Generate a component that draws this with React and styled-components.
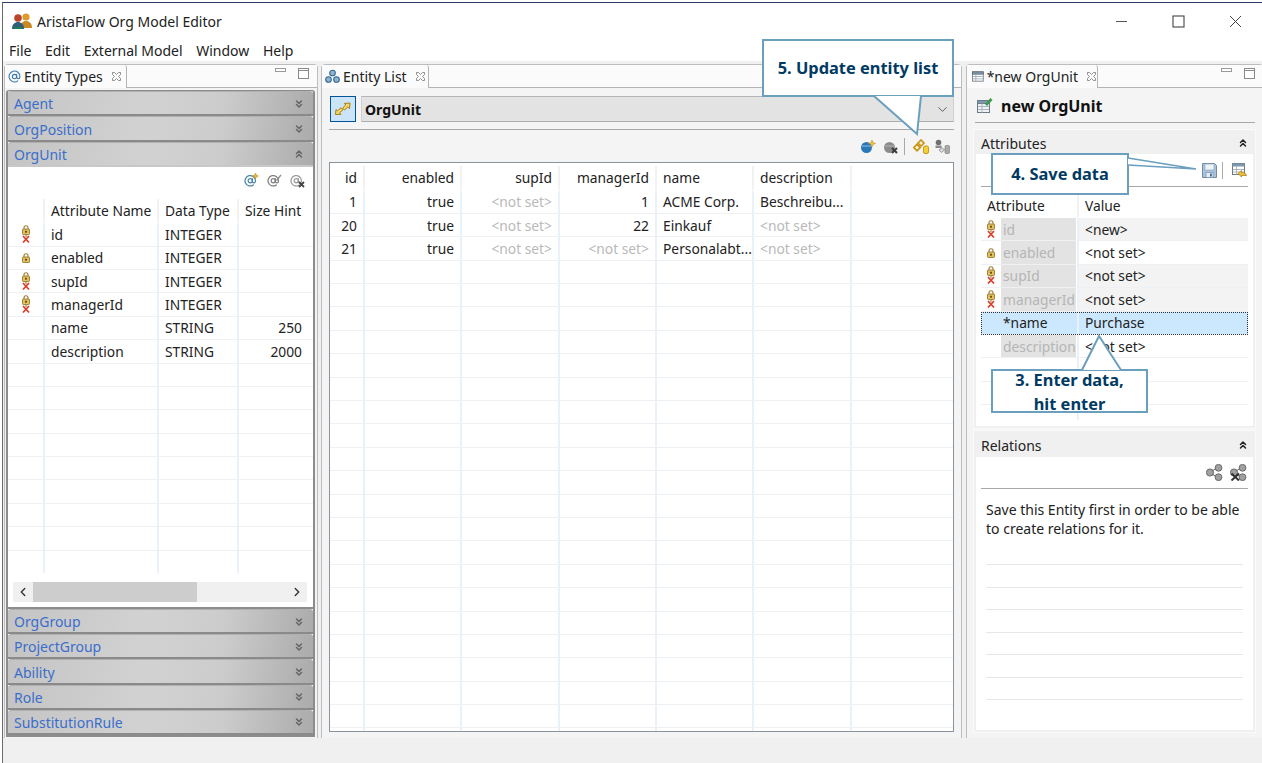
import React from "react";
import styled, { createGlobalStyle } from "styled-components";
import { ChevronsDown, ChevronsUp, ChevronDown, ChevronLeft, ChevronRight, AtSign } from "lucide-react";

const Global = createGlobalStyle`
  html, body { margin: 0; padding: 0; background: #fff; }
  body { font-family: "Noto Sans", "Open Sans", sans-serif; font-size: 14px; color: #1c1c1c; }
  * { box-sizing: border-box; }
`;

const Win = styled.div`
  position: relative; width: 1262px; height: 763px; overflow: hidden; background: #fff;
  padding-top: 2px; display: flex; flex-direction: column;
`;
const Frame = styled.div`
  flex: 1; min-height: 0; display: flex; flex-direction: column; margin-left: 2px;
  border-top: 1px solid #2e3a66; border-left: 1px solid #6a6a6a; background: #fff;
`;
const TitleBar = styled.div`height: 36px; display: flex; align-items: center; padding-left: 8px; gap: 4px; flex: none;`;
const TitleText = styled.span`font-size: 14px; color: #222;`;
const WinButtons = styled.div`margin-left: auto; display: flex; margin-right: -2px; align-items: center;`;
const WinButton = styled.div`width: 57px; height: 24px; display: flex; align-items: center; justify-content: center; color: #444;`;
const MenuBar = styled.div`height: 22px; display: flex; align-items: center; padding-left: 6px; gap: 13.6px; flex: none;`;
const MenuItem = styled.span`font-size: 14px; color: #222;`;
const Workbench = styled.div`
  height: 677px; flex: none; background: #f0f0f0; display: flex; padding-top: 3px; padding-left: 1px;
`;
const Status = styled.div`flex: 1; background: #f0f0f0;`;

const Panel = styled.div`
  width: ${p => p.$w}px; margin-left: ${p => p.$ml || 0}px; height: 675px; background: #f4f4f4;
  border: 1px solid #bdbdbd; border-radius: 4px 4px 0 0; display: flex; flex-direction: column; flex: none;
  box-shadow: 0 1px 0 #9c9c9c;
  ${p => p.$open && "border-right: 0;"}
`;
const TabStrip = styled.div`
  height: 23px; flex: none; display: flex; border-bottom: 1px solid #b4b4b4; background: #fbfbfb; position: relative;
`;
const Tab = styled.div`
  width: ${p => p.$w}px; height: 23px; display: flex; align-items: center; padding: 0 0 1px ${p => p.$pl || 3}px; gap: 3px;
  border-right: 1px solid #b4b4b4; font-size: 14px; background: #fbfbfb; border-radius: 3px 3px 0 0; color: #222; white-space: nowrap;
`;
const TabClose = styled.svg`margin-left: 5px; flex: none;`;
const ViewControls = styled.div`margin-left: auto; display: flex; align-items: flex-start; gap: 12px; padding: 2px 8px 0 0;`;
const LeftBody = styled.div`
  flex: 1; min-height: 0; margin: 2px 2px 1px 1px; border: 1px solid #8c8c8c; border-width: 1px 2px 2px 2px;
  display: flex; flex-direction: column; background: #fff; border-radius: 3px 3px 0 0;
`;
const SectionHead = styled.div`
  height: ${p => p.$h || 25.4}px; flex: none; display: flex; align-items: center; padding: 0 8px 1px 6px;
  font-size: 14px; color: #3b6ecb; border-radius: 3px 3px 0 0;
  background: linear-gradient(100deg, #c4c4c4 0%, #d2d2d2 45%, #cccccc 70%, #ababab 100%);
  border-top: 1px solid #b0b0b0;
  box-shadow: inset 0 -2px 0 ${p => p.$open ? "#c8c8c8" : "#8a8a8a"};
  justify-content: space-between;
  svg { color: #666; }
`;
const SectionBody = styled.div`flex: 1; min-height: 0; display: flex; flex-direction: column; background: #fff; overflow: hidden; border-bottom: 2px solid #8c8c8c;`;
const IconBar = styled.div`
  height: ${p => p.$h}px; flex: none; display: flex; justify-content: flex-end; align-items: center; gap: ${p => p.$gap || 0}px;
  padding-right: ${p => p.$pr || 0}px; margin-bottom: ${p => p.$mb || 0}px;
`;
const ToolSlot = styled.div`display: flex; align-items: center; margin-left: ${p => p.$ml || 0}px;`;
const TableBox = styled.div`
  flex: ${p => p.$h ? "none" : 1}; min-height: 0; overflow: hidden; height: ${p => p.$h ? p.$h + "px" : "auto"};
  ${p => p.$framed && "border: 1px solid #8a949e; margin: 0 7px 0 0; background: #fff;"}
  ${p => p.$inset && `margin: 0 ${p.$inset}px 0 ${p.$inset}px;`}
`;
const Row = styled.div`
  display: grid; grid-template-columns: ${p => p.$cols}; height: ${p => p.$h || 23.4}px; padding-top: ${p => p.$pt || 0}px;
  border-bottom: 1px solid ${p => p.$head ? "transparent" : "#eef0f3"};
  ${p => p.$selected && "background: #cce8ff; outline: 1px dotted #333; outline-offset: -1px;"}
`;
const Cell = styled.div`
  display: flex; align-items: center; padding: 0 6px; white-space: nowrap; overflow: hidden; font-size: 13.8px; color: ${p => p.$muted ? "#b9b9b9" : "#222"};
  justify-content: ${p => p.$right ? "flex-end" : p.$center ? "center" : "flex-start"};
  border-right: 2px solid ${p => p.$head ? "#f2f2f2" : "#e9f1fb"};
  ${p => p.$last && "border-right: 0;"}
  ${p => p.$tint && "background: #f3f3f3;"}
`;
const AttrCell = styled.div`
  display: flex; align-items: stretch; overflow: hidden; border-right: 2px solid #e9f1fb;
`;
const AttrIcon = styled.div`width: 20px; flex: none; display: flex; align-items: center; justify-content: center;`;
const AttrName = styled.div`
  flex: 1; margin-right: 1px; display: flex; align-items: center; padding-left: 2px; font-size: 13.8px;
  ${p => p.$disabled ? "background: #e3e3e3; color: #b5b5b5;" : "color: #222;"}
`;
const HScroll = styled.div`
  height: 20px; flex: none; margin: 9px 6px 5px 5px; background: #f0f0f0; display: flex; align-items: center; justify-content: space-between; position: relative; padding: 0 3px;
  svg { color: #333; }
`;
const HThumb = styled.div`position: absolute; left: 20px; top: 0; bottom: 0; width: 164px; background: #cdcdcd;`;
const ComboRow = styled.div`display: flex; gap: 5px; flex: none; padding: 8px 7px 0 8px; height: 34px;`;
const ToggleBtn = styled.div`
  width: 26px; height: 26px; background: #cce4f7; border: 1px solid #005499; flex: none; display: flex; align-items: center; justify-content: center;
`;
const Combo = styled.div`
  flex: 1; height: 26px; background: #e3e3e3; border: 1px solid #d0d0d0; border-top-color: #b5b5b5; border-bottom-color: #adadad; display: flex; align-items: center;
  padding: 0 3px; font-weight: 700; font-size: 14px; justify-content: space-between; color: #111;
  svg { color: #555; }
`;
const Rule = styled.div`height: 1px; flex: none; background: #a8a8a8; margin: ${p => p.$m};`;
const Divider = styled.div`width: 1px; height: 17px; background: #a9a9a9; margin: 0 ${p => p.$mr || 0}px 0 ${p => p.$ml || 0}px;`;
const CenterBody = styled.div`flex: 1; min-height: 0; display: flex; flex-direction: column; padding: 0 0 6px 7px;`;
const FormTitle = styled.div`
  height: 33px; flex: none; display: flex; align-items: center; gap: 8px; padding-left: 10px; font-weight: 700; font-size: 16px; color: #111; margin-top: 1px;
`;
const FormSection = styled.div`
  margin: ${p => p.$mt || 0}px 8px 0 7px; height: ${p => p.$h}px; flex: none; background: #fff; border: 2px solid #f0f0f0; outline: 1px solid #fafafa; display: flex; flex-direction: column;
`;
const FormHead = styled.div`
  height: ${p => p.$h}px; flex: none; background: #f0f0f0; display: flex; align-items: center; justify-content: space-between; padding: 0 4px 0 5px; font-size: 14px; color: #222;
  svg { color: #222; }
`;
const RelText = styled.div`font-size: 14px; line-height: 19px; padding: 11px 10px 0 10px; color: #222; height: 53.5px; flex: none; white-space: nowrap;`;
const BlankLines = styled.div`display: flex; flex-direction: column; margin: 0 10px;`;
const BlankLine = styled.div`height: 22.5px; border-bottom: 1px solid #e6e6e6; flex: none;`;

const Callout = styled.div`
  position: absolute; left: ${p => p.$x}px; top: ${p => p.$y}px; width: ${p => p.$w}px; height: ${p => p.$h}px;
  background: #fff; border: 2px solid #6a9fbe; z-index: 5; display: flex; flex-direction: column; align-items: center; justify-content: ${p => p.$top ? "flex-start" : "center"};
  color: #003a63; font-weight: 700; font-size: 16.4px; line-height: 24px; text-align: center;
`;
const CalloutText = styled.div`position: relative; z-index: 2; margin-top: ${p => p.$shift || 0}px; white-space: nowrap;`;
const Pointer = styled.svg`position: absolute; left: -2px; top: -2px; overflow: visible; z-index: 1;`;

const TabCloseIcon = () => (
  <TabClose width="11" height="11" viewBox="0 0 11 11" fill="none" stroke="#8d8d8d" strokeWidth="1">
    <path d="M1.5 1.5h2L5.5 3.5 7.5 1.5h2v2L7.5 5.5l2 2v2h-2L5.5 7.5l-2 2h-2v-2l2-2-2-2z" />
  </TabClose>
);
const ViewMin = () => <svg width="11" height="8" viewBox="0 0 11 8"><rect x="0.5" y="1.5" width="10" height="3" fill="#fff" stroke="#9a9a9a" /></svg>;
const ViewMax = () => <svg width="11" height="12" viewBox="0 0 11 12"><rect x="0.5" y="1.5" width="10" height="10" fill="#fff" stroke="#8a8a8a" /><path d="M0 3.5h11" stroke="#8a8a8a" /></svg>;

const AppIcon = () => (
  <svg width="22" height="18" viewBox="0 0 22 18">
    <circle cx="15" cy="5" r="3.6" fill="#e09a2a" />
    <path d="M9 16c0-5 3-7 6-7s6 2 6 7z" fill="#c98a25" />
    <circle cx="7" cy="6" r="3.8" fill="#b8452a" />
    <path d="M1 17c0-5 3-7 6-7s6 2 6 7z" fill="#2f5f7a" />
    <path d="M3 16h8" stroke="#1e7f4b" strokeWidth="2" />
  </svg>
);
const LockX = ({ crossed }) => (
  <svg width="10" height={crossed ? 19 : 10} viewBox={crossed ? "0 0 10 19" : "0 0 10 10"}>
    <path d="M3 4V2.8a2 2 0 0 1 4 0V4" fill="none" stroke="#9a7a2e" strokeWidth="1.1" />
    <rect x="1.5" y="4" width="7" height="5.5" rx="0.8" fill="#e0c060" stroke="#8f6d1f" strokeWidth="0.8" />
    <rect x="4" y="5.8" width="2" height="1.8" fill="#6b4e10" />
    {crossed && <path d="M2 11l6 6.5M8 11l-6 6.5" stroke="#d8402e" strokeWidth="1.8" />}
    {crossed && <path d="M5 10v2" stroke="#8f6d1f" strokeWidth="1" />}
  </svg>
);
const AtTool = ({ badge, color = "#4a87a8" }) => (
  <svg width="15" height="15" viewBox="0 0 15 15" fill="none">
    <g transform="translate(0 1.5) scale(0.52)" stroke={color} strokeWidth="2.4" strokeLinecap="round">
      <circle cx="12" cy="12" r="4" />
      <path d="M16 8v5a3 3 0 0 0 6 0v-1a10 10 0 1 0-4 8" />
    </g>
    {badge === "new" && <path d="M11.5 0l1 2 2 1-2 1-1 2-1-2-2-1 2-1z" fill="#e8b530" stroke="#a87f18" strokeWidth=".4" />}
    {badge === "edit" && <path d="M9 7l4.5-5.5 1 1L10 8z" fill="#8c8c8c" />}
    {badge === "del" && <path d="M9 9l5 5M14 9l-5 5" stroke="#444" strokeWidth="1.8" />}
  </svg>
);
const Ball = ({ color, badge }) => (
  <svg width="16" height="15" viewBox="0 0 16 15">
    <circle cx="6.5" cy="8.5" r="5.5" fill={color === "blue" ? "#2b78b8" : "#8c8c8c"} />
    <path d="M1.5 7h10" stroke={color === "blue" ? "#8fc2e8" : "#b5b5b5"} strokeWidth="1" />
    {badge === "new" && <path d="M12 1l1 2.5 2.5 1-2.5 1-1 2.5-1-2.5-2.5-1 2.5-1z" fill="#f0c040" stroke="#b08a20" strokeWidth=".5" />}
    {badge === "del" && <path d="M9 9l5 5M14 9l-5 5" stroke="#3c3c3c" strokeWidth="2" />}
  </svg>
);
const UpdateIcon = () => (
  <svg width="16" height="15" viewBox="0 0 16 15" fill="none">
    <path d="M.8 8.5L4 5.300 7.200 8.500 4 11.700z" fill="#fff6cf" stroke="#c8951a" strokeWidth="1.700" />
    <path d="M5 4L8 1l3 3-3 3z" fill="#fff6cf" stroke="#c8951a" strokeWidth="1.700" />
    <rect x="10.500" y="7" width="5" height="7.500" rx="1.500" fill="#f6cf35" stroke="#b8860b" strokeWidth=".8" />
  </svg>
);
const UpdateGrayIcon = () => (
  <svg width="16" height="15" viewBox="0 0 16 15">
    <circle cx="4.500" cy="3.500" r="2.800" fill="#6f6f6f" />
    <path d="M1.500 6.500h6v2.500h-6z" fill="#8a8a8a" />
    <path d="M5 11l3-2.500 2.500 2.500-3 2.500z" fill="#d6d6d6" stroke="#8a8a8a" strokeWidth=".8" />
    <rect x="11" y="6.500" width="4.500" height="8" rx="1" fill="#a9a9a9" stroke="#777" strokeWidth=".6" />
  </svg>
);
const EntitiesIcon = () => (
  <svg width="15" height="15" viewBox="0 0 15 15" fill="#8fb5d5" stroke="#33688f" strokeWidth="1.1">
    <circle cx="7.5" cy="4" r="2.8" />
    <circle cx="3.5" cy="10.5" r="2.8" />
    <circle cx="11.5" cy="10.5" r="2.8" />
  </svg>
);
const SwapIcon = () => (
  <svg width="20" height="20" viewBox="0 0 20 20" fill="#f6da6a" stroke="#a87c12" strokeWidth="1">
    <path d="M2.500 15.500L3 10.500l1.500 1.300 3.500-3 2 2-3.500 3 1.500 1.500z" />
    <path d="M17 4l-.500 5.500-1.700-1.500-3.300 3-2-2 3.300-3-1.500-1.500z" />
  </svg>
);
const TableIcon = () => (
  <svg width="15" height="13" viewBox="0 0 15 13">
    <rect x=".5" y=".5" width="14" height="12" fill="#fff" stroke="#5d6b78" />
    <rect x=".5" y=".5" width="14" height="3" fill="#7f97ad" stroke="#5d6b78" />
    <path d="M1 6.500h13M1 9.500h13M5 3.500v9" stroke="#93a3b2" />
  </svg>
);
const FormIcon = () => (
  <svg width="16" height="17" viewBox="0 0 16 17">
    <rect x=".5" y="3.500" width="12" height="12" fill="#eef1f4" stroke="#6d7b88" />
    <rect x=".5" y="3.500" width="12" height="3" fill="#7f97ad" stroke="#6d7b88" />
    <path d="M1 9.500h11M1 12.500h11M5 6.500v9" stroke="#aab6c1" />
    <path d="M8 7l5.500-6 2 2L10 9z" fill="#3c9a4a" />
  </svg>
);
const SaveIcon = () => (
  <svg width="15" height="15" viewBox="0 0 15 15">
    <path d="M.5.500h12l2 2v12H.5z" fill="#a9c3dc" stroke="#6f8ba8" />
    <rect x="3" y="1" width="9" height="6" fill="#eef3f8" stroke="#8aa2ba" strokeWidth=".6" />
    <rect x="4" y="9.500" width="7" height="5" fill="#e4ebf2" stroke="#6f8ba8" strokeWidth=".6" />
    <rect x="8" y="10.500" width="1.800" height="3" fill="#4e6d8c" />
  </svg>
);
const RevertIcon = () => (
  <svg width="15" height="15" viewBox="0 0 15 15">
    <rect x=".5" y=".5" width="12" height="11" fill="#fff" stroke="#6d7b88" />
    <rect x=".5" y=".5" width="12" height="3" fill="#7f97ad" />
    <path d="M1 6.500h11M1 9h11M4.500 3.500v8" stroke="#aab6c1" />
    <path d="M6 10.500l3.500-3v1.800c2.500 0 4.500 1 5 3.200h-5v1.500z" fill="#ecbd3a" stroke="#a87c12" strokeWidth=".7" />
  </svg>
);
const RelIcon = ({ del }) => (
  <svg width="17" height="17" viewBox="0 0 17 17" fill="#a0a0a0" stroke="#6c6c6c" strokeWidth="1">
    <circle cx="12.500" cy="3.800" r="3.400" />
    <circle cx="4" cy="8.500" r="3.600" />
    <circle cx="12.500" cy="13.200" r="3.400" />
    <path d="M6 7l4-2.500M6 10l4 2.500" fill="none" />
    {del && <path d="M1.500 9.500l7.500 7M9 9.500l-7.500 7" stroke="#333" strokeWidth="2" />}
  </svg>
);

const leftCols = "37px 114px 80px 69px";
const leftRows = [
  ["x", "id", "INTEGER", ""],
  ["l", "enabled", "INTEGER", ""],
  ["x", "supId", "INTEGER", ""],
  ["x", "managerId", "INTEGER", ""],
  ["", "name", "STRING", "250"],
  ["", "description", "STRING", "2000"],
];
const centerCols = "35px 97px 98px 97px 97px 98px 1fr";
const centerRows = [
  ["1", "true", "<not set>", "1", "ACME Corp.", "Beschreibu..."],
  ["20", "true", "<not set>", "22", "Einkauf", "<not set>"],
  ["21", "true", "<not set>", "<not set>", "Personalabt...", "<not set>"],
];
const attrCols = "98px 1fr";
const attrRows = [
  ["x", "id", "<new>", true],
  ["l", "enabled", "<not set>", false],
  ["x", "supId", "<not set>", true],
  ["x", "managerId", "<not set>", true],
  ["", "*name", "Purchase", false, true],
  ["", "description", "<not set>", false],
];
const NS = "<not set>";
const collapsedTop = ["Agent", "OrgPosition"];
const collapsedBottom = ["OrgGroup", "ProjectGroup", "Ability", "Role", "SubstitutionRule"];
const range = n => Array.from({ length: n }, (_, i) => i);

export default function App() {
  return (
    <Win>
      <Global />
      <Frame>
        <TitleBar>
          <AppIcon />
          <TitleText>AristaFlow Org Model Editor</TitleText>
          <WinButtons>
            <WinButton><svg width="13" height="13" viewBox="0 0 13 13"><path d="M1 6.500h11" stroke="#555" strokeWidth="1" /></svg></WinButton>
            <WinButton><svg width="13" height="13" viewBox="0 0 13 13"><rect x="1" y="1" width="11" height="11" fill="none" stroke="#444" strokeWidth="1.100" /></svg></WinButton>
            <WinButton><svg width="13" height="13" viewBox="0 0 13 13"><path d="M1 1l11 11M12 1L1 12" stroke="#444" strokeWidth="1" /></svg></WinButton>
          </WinButtons>
        </TitleBar>
        <MenuBar>
          {["File", "Edit", "External Model", "Window", "Help"].map(m => <MenuItem key={m}>{m}</MenuItem>)}
        </MenuBar>
        <Workbench>
          <Panel $w={314}>
            <TabStrip>
              <Tab $w={122}><AtSign size={13} color="#3a7ab0" strokeWidth={2} /> Entity Types<TabCloseIcon /></Tab>
              <ViewControls><ViewMin /><ViewMax /></ViewControls>
            </TabStrip>
            <LeftBody>
              {collapsedTop.map(s => <SectionHead key={s}>{s}<ChevronsDown size={12} strokeWidth={3} /></SectionHead>)}
              <SectionHead $open>OrgUnit<ChevronsUp size={12} strokeWidth={3} /></SectionHead>
              <SectionBody>
                <IconBar $h={27} $gap={8} $pr={8} $mb={5}>
                  <AtTool badge="new" />
                  <AtTool badge="edit" color="#7f7f7f" />
                  <AtTool badge="del" color="#9a9a9a" />
                </IconBar>
                <TableBox>
                  <Row $cols={leftCols} $head $h={24}>
                    <Cell $head />
                    <Cell $head>Attribute Name</Cell>
                    <Cell $head>Data Type</Cell>
                    <Cell $head $last>Size Hint</Cell>
                  </Row>
                  {range(16).map(i => {
                    const r = leftRows[i];
                    return (
                      <Row key={i} $cols={leftCols}>
                        <Cell $center>{r && r[0] && <LockX crossed={r[0] === "x"} />}</Cell>
                        <Cell>{r && r[1]}</Cell>
                        <Cell>{r && r[2]}</Cell>
                        <Cell $last $right>{r && r[3]}</Cell>
                      </Row>
                    );
                  })}
                </TableBox>
                <HScroll>
                  <ChevronLeft size={14} strokeWidth={2.4} />
                  <HThumb />
                  <ChevronRight size={14} strokeWidth={2.4} />
                </HScroll>
              </SectionBody>
              {collapsedBottom.map(s => <SectionHead key={s} $h={25.2}>{s}<ChevronsDown size={12} strokeWidth={3} /></SectionHead>)}
            </LeftBody>
          </Panel>

          <Panel $w={641} $ml={3}>
            <TabStrip>
              <Tab $w={107}><EntitiesIcon /> Entity List<TabCloseIcon /></Tab>
            </TabStrip>
            <ComboRow>
              <ToggleBtn><SwapIcon /></ToggleBtn>
              <Combo>OrgUnit<ChevronDown size={15} strokeWidth={1.5} /></Combo>
            </ComboRow>
            <Rule $m="7px 7px 0 7px" />
            <CenterBody>
              <IconBar $h={32} $pr={11}>
                <Ball color="blue" badge="new" />
                <ToolSlot $ml={7}><Ball badge="del" /></ToolSlot>
                <Divider $ml={5} $mr={8} />
                <UpdateIcon />
                <ToolSlot $ml={5}><UpdateGrayIcon /></ToolSlot>
              </IconBar>
              <TableBox $framed>
                <Row $cols={centerCols} $head $h={27.5} $pt={3}>
                  <Cell $head $right>id</Cell>
                  <Cell $head $right>enabled</Cell>
                  <Cell $head $right>supId</Cell>
                  <Cell $head $right>managerId</Cell>
                  <Cell $head>name</Cell>
                  <Cell $head>description</Cell>
                  <Cell $head $last />
                </Row>
                {range(24).map(i => {
                  const r = centerRows[i] || [];
                  return (
                    <Row key={i} $cols={centerCols}>
                      <Cell $right>{r[0]}</Cell>
                      <Cell $right>{r[1]}</Cell>
                      <Cell $right $muted={r[2] === NS}>{r[2]}</Cell>
                      <Cell $right $muted={r[3] === NS}>{r[3]}</Cell>
                      <Cell $muted={r[4] === NS}>{r[4]}</Cell>
                      <Cell $muted={r[5] === NS}>{r[5]}</Cell>
                      <Cell $last />
                    </Row>
                  );
                })}
              </TableBox>
            </CenterBody>
          </Panel>

          <Panel $w={297} $ml={4} $open>
            <TabStrip>
              <Tab $w={131} $pl={5}><TableIcon />*new OrgUnit<TabCloseIcon /></Tab>
              <ViewControls><ViewMin /><ViewMax /></ViewControls>
            </TabStrip>
            <FormTitle><FormIcon />new OrgUnit</FormTitle>
            <Rule $m="0 8px 7px 8px" />
            <FormSection $h={298}>
              <FormHead $h={22}>Attributes<ChevronsUp size={12} strokeWidth={3} /></FormHead>
              <IconBar $h={32} $pr={6}>
                <SaveIcon />
                <Divider $ml={5} $mr={9} />
                <RevertIcon />
              </IconBar>
              <Rule $m="0 5px" />
              <TableBox $h={233} $inset={5}>
                <Row $cols={attrCols} $head $h={31} $pt={7}>
                  <Cell $head>Attribute</Cell>
                  <Cell $head $last>Value</Cell>
                </Row>
                {range(9).map(i => {
                  const r = attrRows[i];
                  return (
                    <Row key={i} $cols={attrCols} $selected={r && r[4]}>
                      <AttrCell>
                        <AttrIcon>{r && r[0] && <LockX crossed={r[0] === "x"} />}</AttrIcon>
                        {r && <AttrName $disabled={!r[4]}>{r[1]}</AttrName>}
                      </AttrCell>
                      <Cell $last $tint={r && r[3]}>{r && r[2]}</Cell>
                    </Row>
                  );
                })}
              </TableBox>
            </FormSection>
            <FormSection $h={301} $mt={3}>
              <FormHead $h={24}>Relations<ChevronsUp size={12} strokeWidth={3} /></FormHead>
              <IconBar $h={31} $pr={6} $gap={7}>
                <RelIcon />
                <RelIcon del />
              </IconBar>
              <Rule $m="0 5px" />
              <RelText>Save this Entity first in order to be able<br />to create relations for it.</RelText>
              <BlankLines>{range(7).map(i => <BlankLine key={i} />)}</BlankLines>
            </FormSection>
          </Panel>
        </Workbench>
        <Status />
      </Frame>

      <Callout $x={762} $y={39} $w={192} $h={58}>
        <Pointer width="192" height="58">
          <polygon points="112,57 155,95 159,57" fill="#fff" />
          <polyline points="112,57 155,95 159,57" fill="none" stroke="#6a9fbe" strokeWidth="2" />
        </Pointer>
        <CalloutText>5. Update entity list</CalloutText>
      </Callout>
      <Callout $x={991} $y={153} $w={138} $h={42}>
        <Pointer width="138" height="42">
          <polygon points="137,5 205,16 137,12" fill="#fff" />
          <polyline points="137,5 205,16 137,12" fill="none" stroke="#6a9fbe" strokeWidth="1.6" />
        </Pointer>
        <CalloutText>4. Save data</CalloutText>
      </Callout>
      <Callout $x={991} $y={369} $w={157} $h={44} $top>
        <Pointer width="157" height="44">
          <polygon points="91,1 108,-33 130,1" fill="#fff" />
          <polyline points="91,1 108,-33 130,1" fill="none" stroke="#6a9fbe" strokeWidth="2" />
        </Pointer>
        <CalloutText $shift={-3}>3. Enter data,<br />hit enter</CalloutText>
      </Callout>
    </Win>
  );
}
